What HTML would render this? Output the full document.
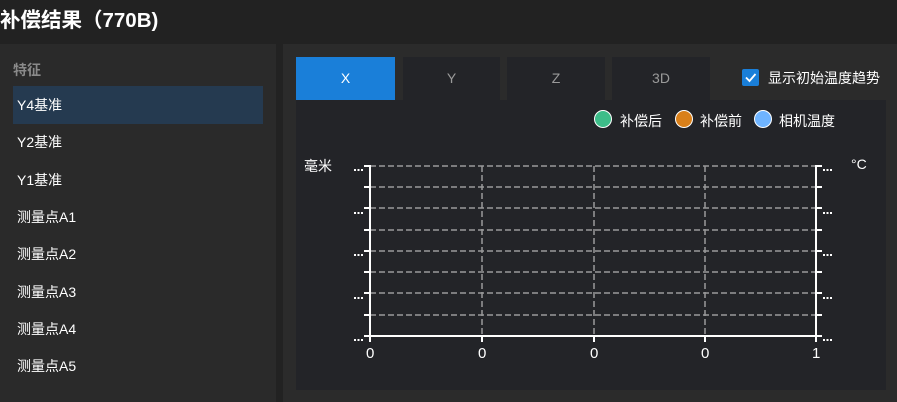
<!DOCTYPE html>
<html><head><meta charset="utf-8"><style>
*{margin:0;padding:0;box-sizing:border-box}
body{width:897px;height:402px;background:#222222;font-family:"Liberation Sans","Noto Sans CJK SC",sans-serif;color:#fff;position:relative;overflow:hidden}
.title{position:absolute;left:0;top:3px;font-size:20.5px;font-weight:bold;color:#fff}
.left{position:absolute;left:0;top:44px;width:276px;height:358px;background:#2a2a2a}
.left .h{position:absolute;left:13px;top:16px;font-size:14px;color:#8a8a8a;font-weight:bold}
.item{position:absolute;left:13px;width:250px;height:38px;line-height:38px;font-size:14px;padding-left:4px;color:#fff}
.sel{background:#253a50}
.right{position:absolute;left:283px;top:44px;width:614px;height:358px;background:#2b2b2b}
.tab{position:absolute;top:57px;height:43px;line-height:43px;text-align:center;font-size:14px;color:#9a9a9a;background:#232428}
.chart{position:absolute;left:296px;top:100px;width:590px;height:290px;background:#232428}
.cb{position:absolute;left:742px;top:69px;width:17px;height:17px;background:#1a7fd9;border-radius:2px}
.lg{position:absolute;top:111px;font-size:14px;color:#fff}
.dot{position:absolute;top:110px;width:18px;height:18px;border-radius:50%;border:1.5px solid #fff}
</style></head><body>
<div class="title">补偿结果（770B)</div>
<div class="left">
<div class="h">特征</div>
<div class="item sel" style="top:42px">Y4基准</div>
<div class="item" style="top:79px">Y2基准</div>
<div class="item" style="top:117px">Y1基准</div>
<div class="item" style="top:154px">测量点A1</div>
<div class="item" style="top:191px">测量点A2</div>
<div class="item" style="top:229px">测量点A3</div>
<div class="item" style="top:266px">测量点A4</div>
<div class="item" style="top:303px">测量点A5</div>
</div>
<div class="right"></div>
<div class="tab" style="left:296px;width:99px;background:#1a7fd9;color:#fff">X</div>
<div class="tab" style="left:403px;width:97px">Y</div>
<div class="tab" style="left:507px;width:98px">Z</div>
<div class="tab" style="left:612px;width:98px">3D</div>
<div class="cb"><svg width="17" height="17"><path d="M4 8.5 L7.5 12 L13.5 5" stroke="#fff" stroke-width="1.8" fill="none"/></svg></div>
<div style="position:absolute;left:768px;top:68px;font-size:14px">显示初始温度趋势</div>
<div class="chart"></div>
<div class="dot" style="left:594px;background:#3dbd89"></div><div class="lg" style="left:620px">补偿后</div>
<div class="dot" style="left:675px;background:#d9801a"></div><div class="lg" style="left:700px">补偿前</div>
<div class="dot" style="left:754px;background:#6fb4ff"></div><div class="lg" style="left:779px">相机温度</div>
<div style="position:absolute;left:304px;top:156px;font-size:14px">毫米</div>
<div style="position:absolute;left:851px;top:156px;font-size:14px">°C</div>
<svg style="position:absolute;left:0;top:0" width="897" height="402">
<g stroke="#9a9a9a" stroke-width="1.5" stroke-dasharray="6,3">
<line x1="370" y1="166" x2="817" y2="166"/><line x1="370" y1="187" x2="817" y2="187"/><line x1="370" y1="208" x2="817" y2="208"/><line x1="370" y1="230" x2="817" y2="230"/><line x1="370" y1="251" x2="817" y2="251"/><line x1="370" y1="272" x2="817" y2="272"/><line x1="370" y1="293" x2="817" y2="293"/><line x1="370" y1="315" x2="817" y2="315"/>
<line x1="482" y1="166" x2="482" y2="336"/><line x1="594" y1="166" x2="594" y2="336"/><line x1="705" y1="166" x2="705" y2="336"/>
</g>
<g stroke="#fff" stroke-width="2">
<line x1="370" y1="165" x2="370" y2="342"/><line x1="816" y1="165" x2="816" y2="342"/><line x1="364" y1="336" x2="822" y2="336"/>
<path d="M364 166h6M364 187h6M364 208h6M364 230h6M364 251h6M364 272h6M364 293h6M364 315h6"/>
<path d="M816 166h6M816 187h6M816 208h6M816 230h6M816 251h6M816 272h6M816 293h6M816 315h6"/>
<path d="M482 336v6M594 336v6M705 336v6"/>
</g>
<g fill="#fff" stroke="#fff" stroke-width="2" stroke-dasharray="2,1.5">
<path d="M354 170h9M354 213h9M354 255h9M354 298h9M354 340h9M823 170h9M823 213h9M823 255h9M823 298h9M823 340h9"/>
</g>
<g fill="#fff" font-family="Liberation Sans,sans-serif" font-size="15">
<text x="366" y="358">0</text><text x="478" y="358">0</text><text x="590" y="358">0</text><text x="701" y="358">0</text><text x="812" y="358">1</text>
</g>
</svg>
</body></html>
